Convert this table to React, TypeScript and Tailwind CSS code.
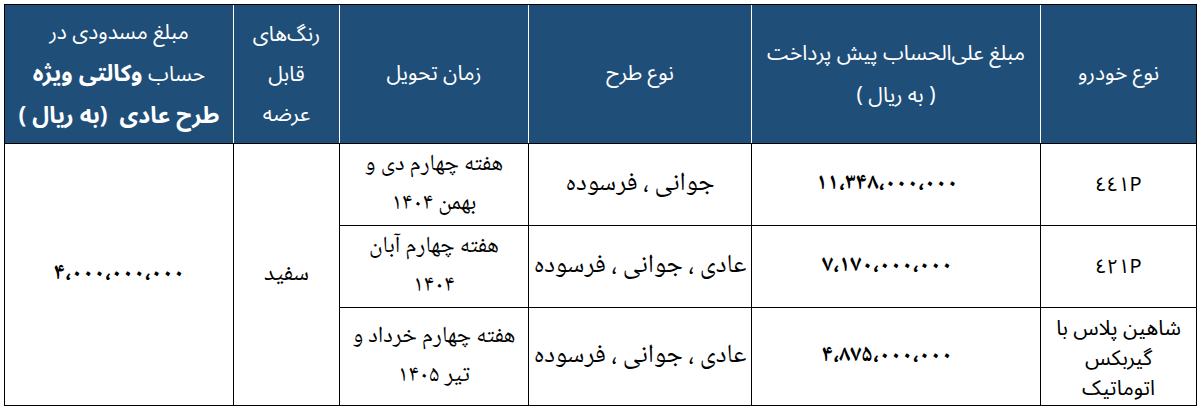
import React from "react";

const naskh = "font-['Noto_Naskh_Arabic','Noto_Sans_Arabic','DejaVu_Sans',serif]";
const sansAr = "font-['Noto_Sans_Arabic','Noto_Naskh_Arabic','DejaVu_Sans',sans-serif]";

const headCell =
  "flex flex-col items-center justify-center text-center text-white bg-[#1f4e79] border-e border-white";

const bodyCell =
  "flex flex-col items-center justify-center text-center text-black bg-white border-t border-black";

function Num({ children }: { children: React.ReactNode }) {
  return (
    <span dir="ltr" className={`${naskh} font-bold text-[23px]`}>
      {children}
    </span>
  );
}

export default function App() {
  return (
    <div className="bg-white w-[1201px] h-[410px] pl-[4px] pt-[4px]">
      <div
        dir="rtl"
        className="w-[1193px] border border-black grid grid-cols-[156px_289px_223px_189px_106px_1fr] grid-rows-[138px_82px_82px_98px]"
      >
        {/* Header */}
        <div className={`${headCell} ${sansAr} text-[21px]`}>نوع خودرو</div>
        <div className={`${headCell} ${sansAr} text-[21px] leading-[42px]`}>
          <div>مبلغ علی‌الحساب پیش پرداخت</div>
          <div>( به ریال )</div>
        </div>
        <div className={`${headCell} ${sansAr} text-[21px]`}>نوع طرح</div>
        <div className={`${headCell} ${sansAr} text-[21px]`}>زمان تحویل</div>
        <div className={`${headCell} ${sansAr} text-[21px] leading-[40px]`}>
          <div>رنگ‌های</div>
          <div>قابل</div>
          <div>عرضه</div>
        </div>
        <div className={`${headCell} border-e-0 ${sansAr} text-[21px] leading-[41px]`}>
          <div>مبلغ مسدودی در</div>
          <div>
            حساب <span className="font-bold text-[23px]">وکالتی ویژه</span>
          </div>
          <div className="font-bold text-[23px]">طرح عادی&nbsp; (به ریال )</div>
        </div>

        {/* Row 1 */}
        <div className={`${bodyCell} border-e ${sansAr} text-[20px]`}>
          <span dir="ltr">٤٤١P</span>
        </div>
        <div className={`${bodyCell} border-e pr-[18px]`}>
          <Num>۱۱،۳۴۸،۰۰۰،۰۰۰</Num>
        </div>
        <div className={`${bodyCell} border-e ${naskh} text-[26px]`}>جوانی ، فرسوده</div>
        <div className={`${bodyCell} border-e ${naskh} text-[23px] leading-[39px]`}>
          <div>هفته چهارم دی و</div>
          <div>بهمن ۱۴۰۴</div>
        </div>
        <div className={`${bodyCell} border-e row-span-3 ${naskh} text-[24px]`}>سفید</div>
        <div className={`${bodyCell} row-span-3`}>
          <Num>۴،۰۰۰،۰۰۰،۰۰۰</Num>
        </div>

        {/* Row 2 */}
        <div className={`${bodyCell} border-e ${sansAr} text-[20px]`}>
          <span dir="ltr">٤٢١P</span>
        </div>
        <div className={`${bodyCell} border-e pr-[18px]`}>
          <Num>۷،۱۷۰،۰۰۰،۰۰۰</Num>
        </div>
        <div className={`${bodyCell} border-e ${naskh} text-[26px]`}>عادی ، جوانی ، فرسوده</div>
        <div className={`${bodyCell} border-e ${naskh} text-[23px] leading-[39px]`}>
          <div>هفته چهارم آبان</div>
          <div>۱۴۰۴</div>
        </div>

        {/* Row 3 */}
        <div className={`${bodyCell} border-e ${sansAr} text-[21px] leading-[30px] pt-[2px]`}>
          <div>شاهین پلاس با</div>
          <div>گیربکس</div>
          <div>اتوماتیک</div>
        </div>
        <div className={`${bodyCell} border-e pr-[18px]`}>
          <Num>۴،۸۷۵،۰۰۰،۰۰۰</Num>
        </div>
        <div className={`${bodyCell} border-e ${naskh} text-[26px]`}>عادی ، جوانی ، فرسوده</div>
        <div className={`${bodyCell} border-e ${naskh} text-[23px] leading-[39px]`}>
          <div>هفته چهارم خرداد و</div>
          <div>تیر ۱۴۰۵</div>
        </div>
      </div>
    </div>
  );
}
